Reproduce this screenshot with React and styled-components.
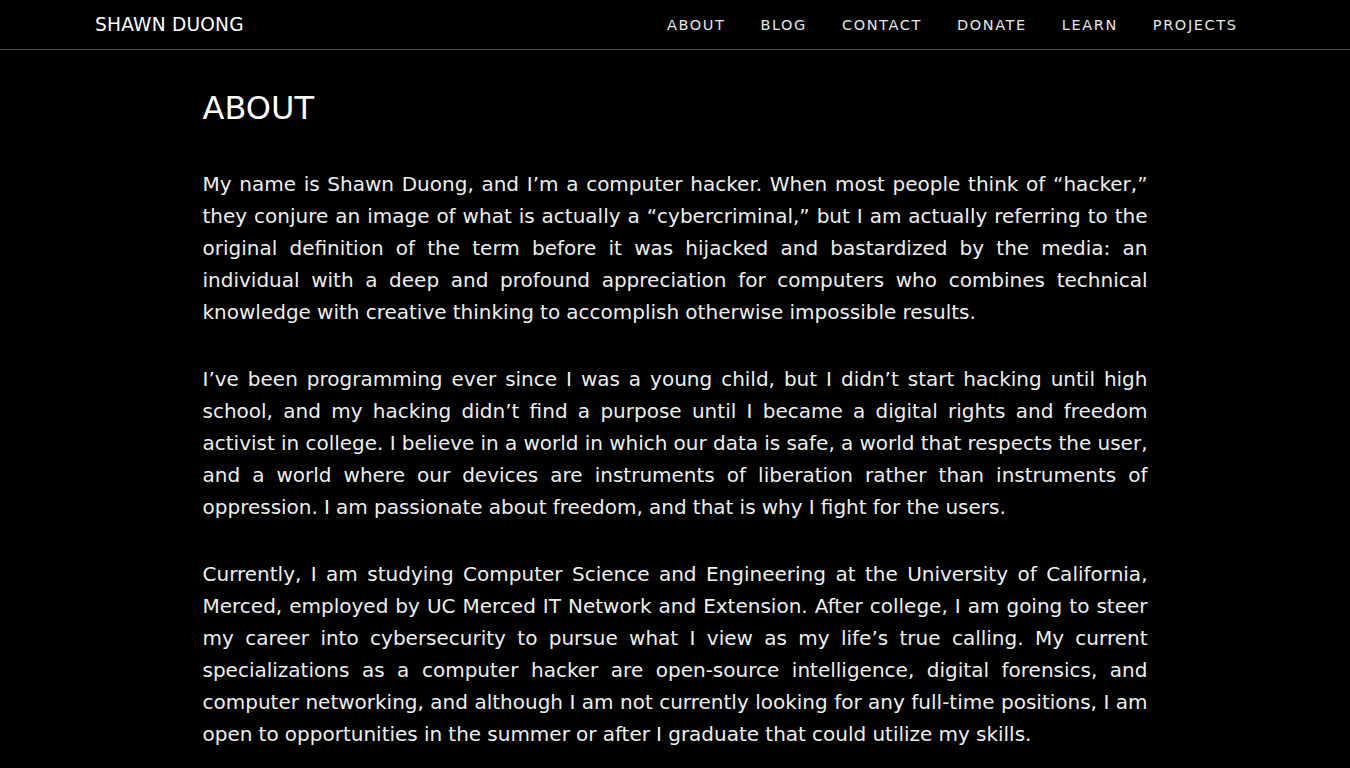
import React from 'react';
import styled, { createGlobalStyle } from 'styled-components';

const GlobalStyle = createGlobalStyle`
  html, body {
    margin: 0;
    padding: 0;
    background: #000;
  }
  body {
    font-family: "DejaVu Sans", "Noto Sans", sans-serif;
    color: #eeeeee;
  }
`;

const Header = styled.header`
  height: 49px;
  border-bottom: 1px solid #4d4d4d;
`;

const HeaderInner = styled.div`
  max-width: 1160px;
  height: 100%;
  margin: 0 auto;
  display: flex;
  align-items: center;
  justify-content: space-between;
`;

const Logo = styled.a`
  color: #fff;
  font-size: 18.6px;
  letter-spacing: 0.2px;
  text-decoration: none;
`;

const Nav = styled.ul`
  display: flex;
  list-style: none;
  margin: 0;
  padding: 0;
`;

const NavItem = styled.li`
  padding: 0 17.5px;
  font-size: 14.5px;
  letter-spacing: 1.6px;
  color: #e6e6e6;
`;

const Main = styled.main`
  width: 945px;
  margin: 0 auto;
  padding-top: 38px;
`;

const Title = styled.h1`
  margin: 0 0 40px;
  font-size: 32px;
  font-weight: normal;
  line-height: 40px;
  color: #fff;
`;

const Paragraph = styled.p`
  margin: 0 0 35px;
  font-size: 20px;
  line-height: 32px;
  word-spacing: -0.2px;
`;

const Line = styled.span`
  display: block;
  white-space: nowrap;
  text-align: justify;
  text-align-last: ${({ last }) => (last ? 'left' : 'justify')};
`;

const paragraphs = [
  [
    'My name is Shawn Duong, and I\u2019m a computer hacker. When most people think of \u201chacker,\u201d',
    'they conjure an image of what is actually a \u201ccybercriminal,\u201d but I am actually referring to the',
    'original definition of the term before it was hijacked and bastardized by the media: an',
    'individual with a deep and profound appreciation for computers who combines technical',
    'knowledge with creative thinking to accomplish otherwise impossible results.',
  ],
  [
    'I\u2019ve been programming ever since I was a young child, but I didn\u2019t start hacking until high',
    'school, and my hacking didn\u2019t find a purpose until I became a digital rights and freedom',
    'activist in college. I believe in a world in which our data is safe, a world that respects the user,',
    'and a world where our devices are instruments of liberation rather than instruments of',
    'oppression. I am passionate about freedom, and that is why I fight for the users.',
  ],
  [
    'Currently, I am studying Computer Science and Engineering at the University of California,',
    'Merced, employed by UC Merced IT Network and Extension. After college, I am going to steer',
    'my career into cybersecurity to pursue what I view as my life\u2019s true calling. My current',
    'specializations as a computer hacker are open-source intelligence, digital forensics, and',
    'computer networking, and although I am not currently looking for any full-time positions, I am',
    'open to opportunities in the summer or after I graduate that could utilize my skills.',
  ],
];

const navLinks = ['ABOUT', 'BLOG', 'CONTACT', 'DONATE', 'LEARN', 'PROJECTS'];

export default function App() {
  return (
    <>
      <GlobalStyle />
      <Header>
        <HeaderInner>
          <Logo href="#">SHAWN DUONG</Logo>
          <Nav>
            {navLinks.map((link) => (
              <NavItem key={link}>{link}</NavItem>
            ))}
          </Nav>
        </HeaderInner>
      </Header>
      <Main>
        <Title>ABOUT</Title>
        {paragraphs.map((lines, i) => (
          <Paragraph key={i}>
            {lines.map((line, j) => (
              <Line key={j} last={j === lines.length - 1}>
                {line}
              </Line>
            ))}
          </Paragraph>
        ))}
      </Main>
    </>
  );
}
